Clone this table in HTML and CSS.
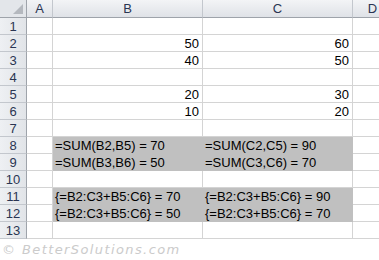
FILE: index.html
```html
<!DOCTYPE html>
<html>
<head>
<meta charset="utf-8">
<link rel="stylesheet" href="styles.css">
</head>
<body>
<div class="sheet">
  <div class="hd corner"><span class="tri"></span></div>
  <div class="hd col">A</div>
  <div class="hd col">B</div>
  <div class="hd col">C</div>
  <div class="hd col last">D</div>

  <div class="hd row">1</div><div class="c"></div><div class="c"></div><div class="c"></div><div class="c"></div>
  <div class="hd row">2</div><div class="c"></div><div class="c num">50</div><div class="c num">60</div><div class="c"></div>
  <div class="hd row">3</div><div class="c"></div><div class="c num">40</div><div class="c num">50</div><div class="c"></div>
  <div class="hd row">4</div><div class="c"></div><div class="c"></div><div class="c"></div><div class="c"></div>
  <div class="hd row">5</div><div class="c"></div><div class="c num">20</div><div class="c num">30</div><div class="c"></div>
  <div class="hd row">6</div><div class="c"></div><div class="c num">10</div><div class="c num">20</div><div class="c"></div>
  <div class="hd row">7</div><div class="c"></div><div class="c"></div><div class="c"></div><div class="c"></div>
  <div class="hd row">8</div><div class="c"></div><div class="c fill">=SUM(B2,B5) = 70</div><div class="c fill">=SUM(C2,C5) = 90</div><div class="c"></div>
  <div class="hd row">9</div><div class="c"></div><div class="c fill">=SUM(B3,B6) = 50</div><div class="c fill">=SUM(C3,C6) = 70</div><div class="c"></div>
  <div class="hd row">10</div><div class="c"></div><div class="c"></div><div class="c"></div><div class="c"></div>
  <div class="hd row">11</div><div class="c"></div><div class="c fill">{=B2:C3+B5:C6} = 70</div><div class="c fill">{=B2:C3+B5:C6} = 90</div><div class="c"></div>
  <div class="hd row">12</div><div class="c"></div><div class="c fill">{=B2:C3+B5:C6} = 50</div><div class="c fill">{=B2:C3+B5:C6} = 70</div><div class="c"></div>
  <div class="hd row">13</div><div class="c"></div><div class="c"></div><div class="c"></div><div class="c"></div>
</div>
<div class="mark">© BetterSolutions.com</div>
</body>
</html>
```
FILE: styles.css
```css
html, body {
  margin: 0;
  padding: 0;
  background: #ffffff;
}
.sheet {
  display: grid;
  grid-template-columns: 27px 26px 150px 150px 40px;
  grid-template-rows: 18px repeat(13, 17px);
  font-family: "Liberation Sans", Arial, sans-serif;
  font-size: 13px;
  color: #000;
}
.hd {
  background: linear-gradient(#f3f4f6, #dfe2e7);
  color: #2a3552;
  border-right: 1px solid #c3c7cd;
  border-bottom: 1px solid #c3c7cd;
  box-sizing: border-box;
  display: flex;
  align-items: center;
  justify-content: center;
  font-size: 13px;
  line-height: 1;
}
.hd.col {
  border-bottom-color: #9ea3aa;
}
.hd.row {
  border-right-color: #9ea3aa;
  background: linear-gradient(90deg, #eef0f3, #e1e4e8);
}
.hd.corner {
  border-right-color: #9ea3aa;
  border-bottom-color: #9ea3aa;
  position: relative;
  background: #e3e6ea;
}
.tri {
  position: absolute;
  right: 3px;
  bottom: 3px;
  width: 0;
  height: 0;
  border-left: 10px solid transparent;
  border-bottom: 10px solid #b4b8be;
}
.c {
  border-right: 1px solid #d4d4d4;
  border-bottom: 1px solid #d4d4d4;
  box-sizing: border-box;
  display: flex;
  align-items: center;
  padding: 0 2px;
  white-space: nowrap;
  line-height: 1;
}
.num {
  justify-content: flex-end;
  padding-right: 3px;
}
.fill {
  background: #c0c0c0;
  border-color: #c0c0c0;
}
.mark {
  margin: 3px 0 0 2px;
  font-family: "DejaVu Sans", sans-serif;
  font-style: italic;
  font-size: 13px;
  letter-spacing: 1.4px;
  color: #cbcbcb;
}
```
